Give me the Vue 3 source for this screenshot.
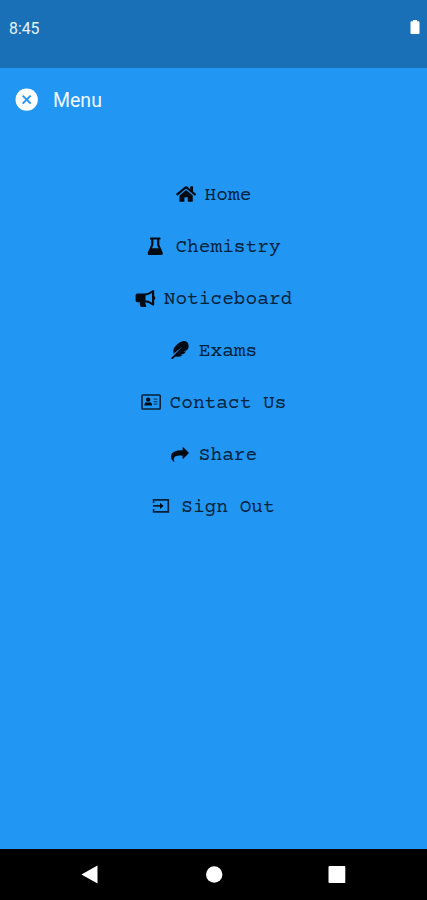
<script setup>
const items = [
  { label: 'Home', icon: 'home' },
  { label: 'Chemistry', icon: 'flask' },
  { label: 'Noticeboard', icon: 'bullhorn' },
  { label: 'Exams', icon: 'feather' },
  { label: 'Contact Us', icon: 'card' },
  { label: 'Share', icon: 'share' },
  { label: 'Sign Out', icon: 'exit' },
]
</script>

<template>
  <div class="screen">
    <header class="status">
      <span>8:45</span>
      <svg class="battery" viewBox="0 0 10 14"><path d="M3 0h4v1.200h1.500q1 0 1 1v10.800q0 1-1 1h-7q-1 0-1-1V2.200q0-1 1-1H3z" /></svg>
    </header>
    <div class="title">
      <svg class="close" viewBox="0 0 24 24">
        <circle cx="11.700" cy="11.600" r="11.200" />
        <path d="M7.700 7.600l8 8M15.700 7.600l-8 8" />
      </svg>
      <span>Menu</span>
    </div>
    <nav class="menu">
      <a v-for="item in items" :key="item.label" class="item">
        <svg class="icon" viewBox="0 0 20 20">
          <g v-if="item.icon === 'home'" transform="translate(.1 1.100) scale(.0347)">
            <path d="M280.370 148.260L96 300.110V464a16 16 0 0 0 16 16l112.060-.29a16 16 0 0 0 15.920-16V368a16 16 0 0 1 16-16h64a16 16 0 0 1 16 16v95.640a16 16 0 0 0 16 16.050L464 480a16 16 0 0 0 16-16V300L295.670 148.260a12.190 12.190 0 0 0-15.300 0zM571.600 251.470L488 182.560V44.050a12 12 0 0 0-12-12h-56a12 12 0 0 0-12 12v72.610L318.470 43a48 48 0 0 0-61 0L4.340 251.470a12 12 0 0 0-1.600 16.900l25.500 31A12 12 0 0 0 45.150 301l235.220-193.740a12.190 12.190 0 0 1 15.300 0L530.900 301a12 12 0 0 0 16.900-1.600l25.500-31a12 12 0 0 0-1.700-16.930z" />
          </g>
          <path v-else-if="item.icon === 'flask'" fill-rule="evenodd" d="M4.600 1.500h9.300q.6 0 .6.700v.7q0 .7-.7.700h-.5v5.200l3.300 7.400q.9 2.800-1.700 2.800H3.600q-2.600 0-1.700-2.800l3.300-7.400V3.600H4.700q-.7 0-.7-.7v-.7q0-.7.6-.7zM7.400 3.600v5.300L6 12.200h6.500L11.100 8.900V3.600z" />
          <path v-else-if="item.icon === 'bullhorn'" fill-rule="evenodd" d="M2.300 5.500H10q4-.3 7.200-3 2-1.200 2 .7v4.900q1.100.8 1.100 2t-1.100 2v4.500q0 1.900-2 .7-3-2.500-6.700-3-.5 1.500.5 3 .8.900-.3 1.700H6.500q-.9 0-1.200-1-.9-2.200-.4-3.800H2.300Q.6 14.200.6 12.500V7.200q0-1.700 1.700-1.700zM10.500 7.400v4.900q3.800.4 6.500 2.400V5q-2.700 2-6.500 2.400z" />
          <path v-else-if="item.icon === 'feather'" d="M17.500 2.400q2.400 3.600-.2 7.600l-4.100 1.400h3l-2.200 2.300-4 1.200h2.700q-2.800 2.500-7.500 1.800l-2.500 2.200q-1 .4-1.300-.2-.3-.6.3-1.300L12.500 6.500 3.500 13.800Q2.300 8.600 6.500 5 11.500.2 15.500 1.200 16.800 1.500 17.500 2.400z" />
          <g v-else-if="item.icon === 'card'">
            <rect class="line" x="1" y="3" width="18.200" height="14" rx=".8" />
            <circle cx="7.200" cy="7.600" r="2.200" />
            <path d="M3.400 13.500q0-3.200 2.400-3.200l1.400.4 1.400-.4q2.400 0 2.400 3.200z" />
            <path class="detail" d="M12.600 6.500h3.800v1.300h-3.800zm0 2.500h3.800v1.300h-3.800zm0 2.500h3.800v1.300h-3.800z" />
          </g>
          <path v-else-if="item.icon === 'share'" d="M12.600 3.500q.1-.7.700-.3l5.200 5.300q.5.500 0 1L13.300 14.700q-.6.400-.7-.3v-2.700Q4.200 11 3.900 14.600q0 1.500.4 2.600.1 1-.8.500Q.8 15.200.9 12 1.600 6.100 12.600 6.200z" />
          <g v-else>
            <path class="line" d="M1.600 7V3.900h14.700v12h-14.700v-3M1 9.900h8" />
            <path d="M8 6.700l3.600 3.200L8 13.100z" />
          </g>
        </svg>
        <span class="label">{{ item.label }}</span>
      </a>
    </nav>
    <footer class="navbar">
      <svg viewBox="0 0 20 20"><path d="M1.400 10.500L17.500 1.500v18z" /></svg>
      <svg viewBox="0 0 20 20"><circle cx="10.200" cy="10.500" r="8.200" /></svg>
      <svg viewBox="0 0 20 20"><rect x="1.500" y="2.100" width="16.800" height="16.800" rx="1" /></svg>
    </footer>
  </div>
</template>

<style>
body {
  margin: 0;
}
</style>

<style scoped>
.screen {
  display: flex;
  flex-direction: column;
  height: 900px;
  background: #2196f3;
  font-family: Roboto, sans-serif;
  overflow: hidden;
}
.status {
  box-sizing: border-box;
  height: 68px;
  padding: 17px 7px 0 9px;
  display: flex;
  justify-content: space-between;
  align-items: flex-start;
  background: #1a70b6;
  color: #e6f3fd;
  font-size: 15.800px;
  line-height: 23px;
}
.battery {
  width: 10px;
  height: 14px;
  margin-top: 3px;
  fill: #fff;
}
.title {
  display: flex;
  align-items: center;
  gap: 14px;
  height: 24px;
  padding: 20px 0 0 15px;
  color: #f3faff;
  font-size: 19.500px;
}
.close {
  width: 24px;
  height: 24px;
  fill: #fff;
}
.close path {
  stroke: #2196f3;
  stroke-width: 2;
}
.menu {
  flex: 1;
  padding-top: 56px;
}
.item {
  display: flex;
  align-items: center;
  justify-content: center;
  gap: 9px;
  height: 52px;
  color: #04223b;
  font-family: "Courier Prime", "Liberation Mono", monospace;
  font-size: 19.500px;
  line-height: 24px;
}
.label {
  padding-top: 4px;
}
.icon {
  width: 20px;
  height: 20px;
  flex: none;
  fill: #020b13;
  overflow: visible;
}
.line {
  fill: none;
  stroke: #062039;
  stroke-width: 1.600;
}
.detail {
  fill: #0c4677;
}
.navbar {
  box-sizing: border-box;
  display: flex;
  justify-content: space-between;
  height: 51px;
  padding: 15px 80px 0;
  background: #000;
}
.navbar svg {
  width: 20px;
  height: 20px;
  fill: #fff;
}
</style>
